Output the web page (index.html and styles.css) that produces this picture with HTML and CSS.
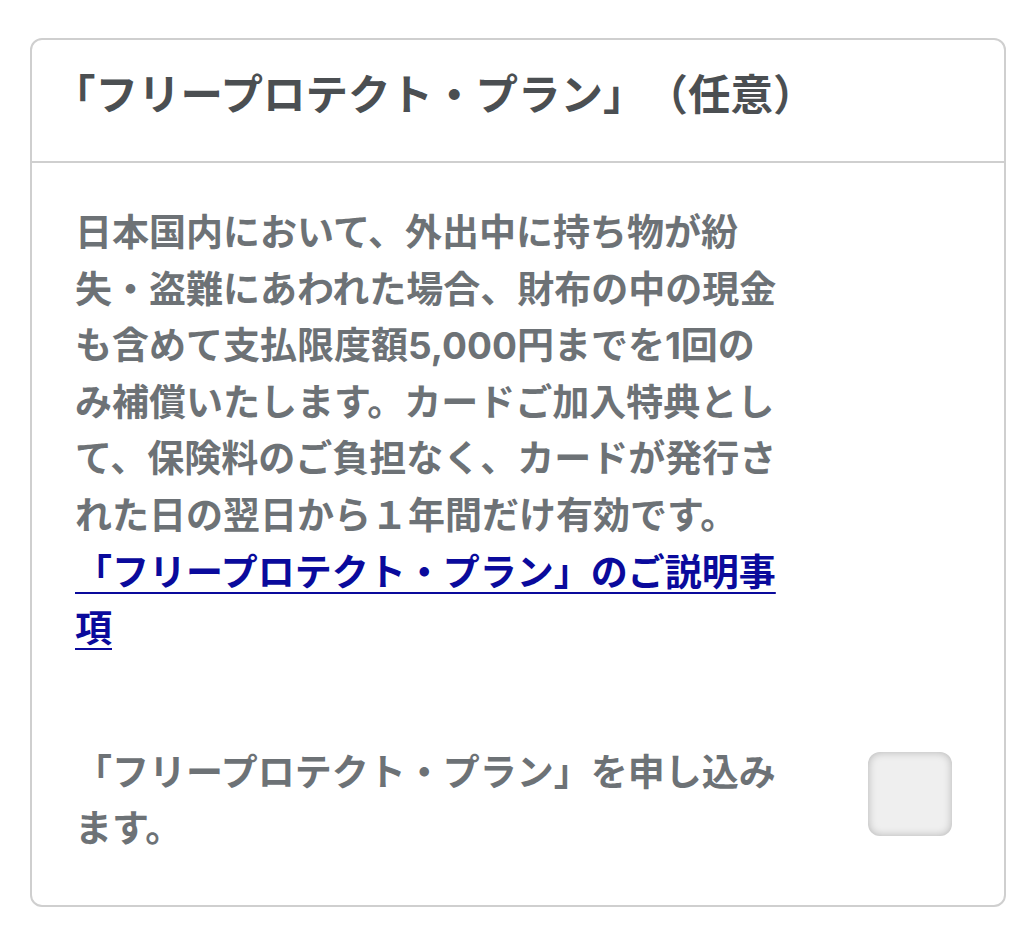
FILE: index.html
```html
<!DOCTYPE html>
<html lang="ja">
<head>
<meta charset="utf-8">
<title>フリープロテクト・プラン</title>
<link rel="stylesheet" href="styles.css">
</head>
<body>
<section class="card">
  <header class="card-head">
    <h2 class="card-title">「フリープロテクト・プラン」（任意）</h2>
  </header>
  <div class="card-body">
    <p class="desc">日本国内において、外出中に持ち物が紛失・盗難にあわれた場合、財布の中の現金も含めて支払限度額5,000円までを1回のみ補償いたします。カードご加入特典として、保険料のご負担なく、カードが発行された日の翌日から１年間だけ有効です。<br><a class="desc-link" href="#">「フリープロテクト・プラン」のご説明事項</a></p>
    <div class="apply-row">
      <label class="apply-label" for="apply">「フリープロテクト・プラン」を申し込みます。</label>
      <span class="check"><input type="checkbox" id="apply" class="check-input"></span>
    </div>
  </div>
</section>
</body>
</html>
```

FILE: styles.css
```css
html, body {
  margin: 0;
  padding: 0;
  background: #ffffff;
}

body {
  font-family: Inter, "Noto Sans CJK JP", sans-serif;
  font-weight: 700;
  padding: 38px 18px 0 30px;
  text-spacing-trim: space-all;
}

.card {
  border: 2px solid #cfcfcf;
  border-radius: 12px;
  background: #ffffff;
}

.card-head {
  border-bottom: 2px solid #cfcfcf;
  padding: 23px 20px 34px 21px;
}

.card-title {
  margin: 0;
  font-size: 42.5px;
  line-height: 64px;
  font-weight: 700;
  color: #4b4f52;
}

.card-body {
  padding: 42px 52px 47px 43px;
}

.desc {
  margin: 0;
  width: 708px;
  font-size: 37px;
  line-height: 56.6px;
  color: #6d7276;
}

.desc-link {
  color: #0a0a9c;
  text-decoration: underline;
  text-decoration-thickness: 2px;
  text-underline-offset: 6px;
}

.apply-row {
  margin-top: 87px;
  display: grid;
  grid-template-columns: 708px 84px;
  column-gap: 85px;
  align-items: start;
}

.apply-label {
  font-size: 37px;
  line-height: 56.6px;
  color: #6d7276;
}

.check {
  display: block;
  margin-top: 7px;
  width: 84px;
  height: 84px;
  border-radius: 12px;
  background: #efefef;
  box-shadow: inset 0 0 8px rgba(0, 0, 0, 0.25);
}

.check-input {
  appearance: none;
  -webkit-appearance: none;
  margin: 0;
  width: 100%;
  height: 100%;
  border: 0;
  background: transparent;
  display: block;
}
```
